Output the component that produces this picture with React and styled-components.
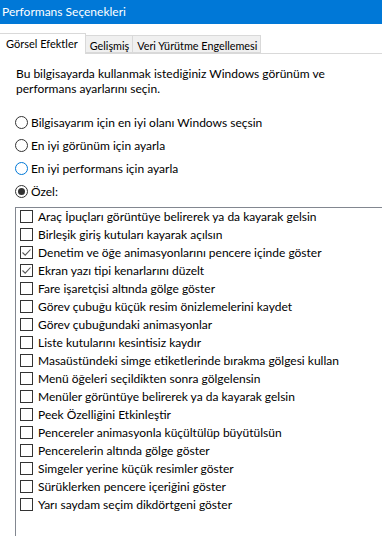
import styled, { createGlobalStyle } from "styled-components";

const GlobalStyle = createGlobalStyle`
  html, body {
    margin: 0;
    padding: 0;
    background: #ffffff;
    overflow: hidden;
  }
  body {
    font-family: Lato, "Noto Sans", sans-serif;
    font-size: 12px;
    color: #000000;
  }
`;

const effects = [
  { label: "Araç İpuçları görüntüye belirerek ya da kayarak gelsin", checked: false },
  { label: "Birleşik giriş kutuları kayarak açılsın", checked: false },
  { label: "Denetim ve öğe animasyonlarını pencere içinde göster", checked: true },
  { label: "Ekran yazı tipi kenarlarını düzelt", checked: true },
  { label: "Fare işaretçisi altında gölge göster", checked: false },
  { label: "Görev çubuğu küçük resim önizlemelerini kaydet", checked: false },
  { label: "Görev çubuğundaki animasyonlar", checked: false },
  { label: "Liste kutularını kesintisiz kaydır", checked: false },
  { label: "Masaüstündeki simge etiketlerinde bırakma gölgesi kullan", checked: false },
  { label: "Menü öğeleri seçildikten sonra gölgelensin", checked: false },
  { label: "Menüler görüntüye belirerek ya da kayarak gelsin", checked: false },
  { label: "Peek Özelliğini Etkinleştir", checked: false },
  { label: "Pencereler animasyonla küçültülüp büyütülsün", checked: false },
  { label: "Pencerelerin altında gölge göster", checked: false },
  { label: "Simgeler yerine küçük resimler göster", checked: false },
  { label: "Sürüklerken pencere içeriğini göster", checked: false },
  { label: "Yarı saydam seçim dikdörtgeni göster", checked: false },
];

// görsel ayar seçenekleri (hover = mavi kenarlık)
const modes = [
  { label: "Bilgisayarım için en iyi olanı Windows seçsin", state: "off" },
  { label: "En iyi görünüm için ayarla", state: "off" },
  { label: "En iyi performans için ayarla", state: "hover" },
  { label: "Özel:", state: "on" },
];

const App = () => {
  return (
    <Window>
      <GlobalStyle />
      <TitleBar>Performans Seçenekleri</TitleBar>
      <TabStrip>
        <Tab $active>Görsel Efektler</Tab>
        <Tab>Gelişmiş</Tab>
        <Tab>Veri Yürütme Engellemesi</Tab>
      </TabStrip>
      <Content>
        <Intro>
          <div>Bu bilgisayarda kullanmak istediğiniz Windows görünüm ve</div>
          <div>performans ayarlarını seçin.</div>
        </Intro>
        <RadioGroup>
          {modes.map((m) => (
            <RadioRow key={m.label}>
              <RadioCircle $state={m.state}>
                {m.state === "on" && <RadioDot />}
              </RadioCircle>
              {m.label}
            </RadioRow>
          ))}
        </RadioGroup>
        <ListBox>
          {effects.map((e) => (
            <CheckRow key={e.label}>
              <CheckBox>
                {e.checked && (
                  <svg width="11" height="11" viewBox="0 0 11 11">
                    <path
                      d="M1.5 5.5 L4.2 8.2 L9.5 2.5"
                      fill="none"
                      stroke="#555"
                      strokeWidth="1.1"
                    />
                  </svg>
                )}
              </CheckBox>
              {e.label}
            </CheckRow>
          ))}
        </ListBox>
      </Content>
    </Window>
  );
};

const Window = styled.div`
  width: 382px;
  height: 536px;
  display: flex;
  flex-direction: column;
  overflow: hidden;
`;

const TitleBar = styled.div`
  height: 24px;
  background-color: #0078d7;
  color: #ffffff;
  display: flex;
  align-items: center;
  padding-left: 2px;
  padding-bottom: 1px;
  box-sizing: border-box;
  font-size: 12px;
`;

const TabStrip = styled.div`
  display: flex;
  align-items: flex-end;
  margin-top: 8px;
  height: 21px;
  border-bottom: 1px solid #d9d9d9;
`;

const Tab = styled.div`
  height: ${(p) => (p.$active ? "21px" : "18px")};
  margin-bottom: ${(p) => (p.$active ? "-1px" : "0")};
  padding: ${(p) => (p.$active ? "0 7px 1px 6px" : "2px 3px 0 4px")};
  box-sizing: border-box;
  display: flex;
  align-items: center;
  background-color: ${(p) => (p.$active ? "#ffffff" : "#f0f0f0")};
  border: 1px solid #d9d9d9;
  border-bottom: ${(p) => (p.$active ? "none" : "1px solid #d9d9d9")};
  border-left: ${(p) => (p.$active ? "none" : "1px solid #d9d9d9")};
  margin-left: ${(p) => (p.$active ? "0" : "-1px")};
  font-size: ${(p) => (p.$active ? "11px" : "10.8px")};
  white-space: nowrap;
`;

const Content = styled.div`
  flex: 1;
  display: flex;
  flex-direction: column;
  padding: 12px 0 0 15px;
`;

const Intro = styled.div`
  padding-left: 1px;
  line-height: 15px;
  display: flex;
  flex-direction: column;
`;

const RadioGroup = styled.div`
  display: flex;
  flex-direction: column;
  margin-top: 19px;
  gap: 9px;
`;

const RadioRow = styled.div`
  display: flex;
  align-items: center;
  gap: 3px;
  height: 14px;
  white-space: nowrap;
`;

const RadioCircle = styled.span`
  width: 13px;
  height: 13px;
  box-sizing: border-box;
  border-radius: 50%;
  border: 1px solid ${(p) => (p.$state === "hover" ? "#0078d7" : "#333333")};
  display: flex;
  align-items: center;
  justify-content: center;
`;

const RadioDot = styled.span`
  width: 7px;
  height: 7px;
  border-radius: 50%;
  background-color: #333333;
`;

const ListBox = styled.div`
  flex: 1;
  margin-top: 9px;
  border-top: 1px solid #828790;
  border-left: 1px solid #828790;
  padding: 0 0 0 4px;
  display: flex;
  flex-direction: column;
  width: 400px;
`;

const CheckRow = styled.div`
  display: flex;
  align-items: center;
  gap: 5px;
  height: 18px;
  padding-bottom: 1px;
  box-sizing: border-box;
  flex-shrink: 0;
  white-space: nowrap;
`;

const CheckBox = styled.span`
  width: 13px;
  height: 13px;
  box-sizing: border-box;
  border: 1px solid #333333;
  display: flex;
  align-items: center;
  justify-content: center;
  flex-shrink: 0;
`;

export default App;
